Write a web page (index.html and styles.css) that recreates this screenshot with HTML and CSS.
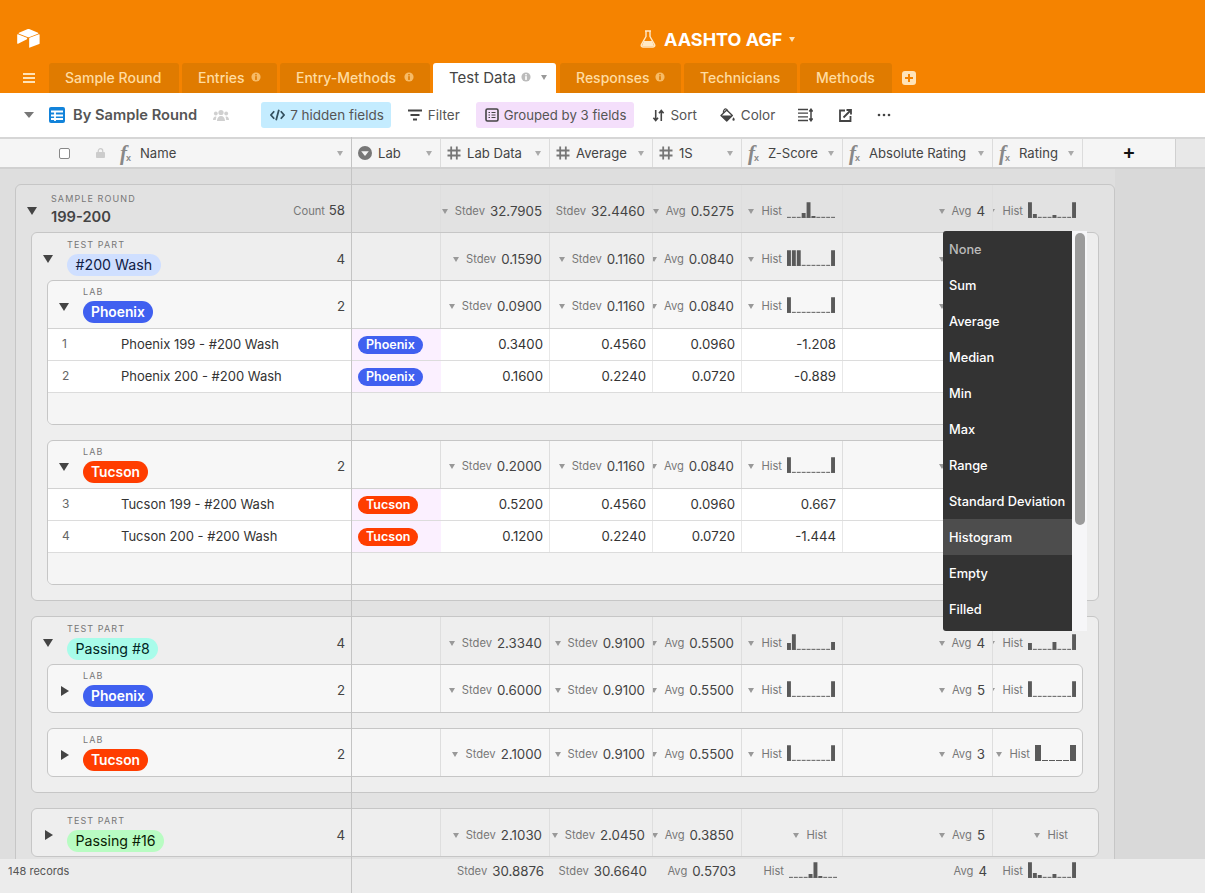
FILE: index.html
```html
<!DOCTYPE html>
<html lang="en">
<head>
<meta charset="utf-8">
<title>AASHTO AGF</title>
<link rel="stylesheet" href="styles.css">
</head>
<body>
<svg class="sprite" xmlns="http://www.w3.org/2000/svg">
  <symbol id="i-info" viewBox="0 0 12 12"><circle cx="6" cy="6" r="5.5" fill="currentColor"/><rect x="5" y="5" width="2" height="4.5" class="info-mark"/><rect x="5" y="2.5" width="2" height="1.6" class="info-mark"/></symbol>
  <symbol id="i-hash" viewBox="0 0 14 14"><path d="M4.2 0.5v13M9.8 0.5v13M0.5 4.5h13M0.5 9.5h13" fill="none" stroke="currentColor" stroke-width="1.8"/></symbol>
  <symbol id="h-za" viewBox="0 0 49 16"><path d="M0 15.5H49" stroke="#5a5a5a" stroke-dasharray="4 1"/><path d="M15 11h4v5h-4zM20 0h4v16h-4zM25 14h4v2h-4z" fill="#5a5a5a"/></symbol>
  <symbol id="h-ra" viewBox="0 0 49 16"><path d="M0 15.5H49" stroke="#5a5a5a" stroke-dasharray="4 1"/><path d="M0 0h4v16h-4zM5 12h4v4h-4zM25 13h4v3h-4zM45 0h4v16h-4z" fill="#5a5a5a"/></symbol>
  <symbol id="h-zb" viewBox="0 0 49 16"><path d="M0 15.5H49" stroke="#5a5a5a" stroke-dasharray="4 1"/><path d="M0 0h4v16h-4zM5 0h4v16h-4zM10 0h4v16h-4zM45 0h4v16h-4z" fill="#5a5a5a"/></symbol>
  <symbol id="h-fl" viewBox="0 0 49 16"><path d="M0 15.5H49" stroke="#5a5a5a" stroke-dasharray="4 1"/><path d="M0 0h4v16h-4zM45 0h4v16h-4z" fill="#5a5a5a"/></symbol>
  <symbol id="h-zc" viewBox="0 0 49 16"><path d="M0 15.5H49" stroke="#5a5a5a" stroke-dasharray="4 1"/><path d="M0 9h4v7h-4zM5 0h4v16h-4zM45 8h4v8h-4z" fill="#5a5a5a"/></symbol>
  <symbol id="h-rc" viewBox="0 0 49 16"><path d="M0 15.5H49" stroke="#5a5a5a" stroke-dasharray="4 1"/><path d="M0 9h4v7h-4zM25 8h4v8h-4zM45 0h4v16h-4z" fill="#5a5a5a"/></symbol>
  <symbol id="h-six" viewBox="0 0 41 16"><path d="M7 15.5H35" stroke="#5a5a5a" stroke-dasharray="6 1"/><path d="M0 0h6v16H0zM35 0h6v16h-6z" fill="#5a5a5a"/></symbol>
  <symbol id="h-zf" viewBox="0 0 49 16"><path d="M0 15.5H49" stroke="#5a5a5a" stroke-dasharray="4 1"/><path d="M20 12h4v4h-4zM25 0h4v16h-4zM30 14h4v2h-4z" fill="#5a5a5a"/></symbol>
  <symbol id="h-rf" viewBox="0 0 49 16"><path d="M0 15.5H49" stroke="#5a5a5a" stroke-dasharray="4 1"/><path d="M0 0h4v16h-4zM5 11h4v5h-4zM10 13h4v3h-4zM25 12h4v4h-4zM45 0h4v16h-4z" fill="#5a5a5a"/></symbol>
</svg>

<header class="appbar">
  <div class="appbar-top">
    <svg class="logo" viewBox="0 0 24 20"><path fill="#fff" d="M10.7.3 2 3.9c-.5.2-.5.9 0 1.1l8.8 3.5c.8.3 1.6.3 2.4 0L22 5c.5-.2.5-.9 0-1.1L13.3.3c-.8-.4-1.8-.4-2.6 0z"/><path fill="#fff" d="M12.7 10.4v8.700c0 .4.400.7.8.5l9.800-3.800c.3-.1.400-.3.400-.6V6c0-.4-.4-.7-.8-.5l-9.800 3.800c-.2.100-.4.300-.4.600z"/><path fill="#fff" d="M10.400 10.900 1 15.400c-.4.200-.9-.1-.9-.5V6.100c0-.2.100-.3.200-.4.100 0 .1-.1.200-.1.100-.1.300-.1.400 0l9.400 3.700c.5.200.5.900.1 1.100z"/></svg>
    <svg class="flask" viewBox="0 0 16 18"><path d="M5 1h6M6 1v5.500L1.400 14.600C.8 15.700 1.500 17 2.800 17h10.400c1.300 0 2-1.300 1.400-2.400L10 6.500V1" fill="none" stroke="#ffe9c6" stroke-width="1.400" stroke-linejoin="round"/><path d="M4 11h8l2 4.500-.6.800H2.600L2 15.500z" fill="#ffe9c6"/></svg>
    <h1 class="base-title">AASHTO AGF</h1>
    <span class="caret caret-title"></span>
  </div>
  <nav class="tabbar">
    <svg class="burger" viewBox="0 0 12 10"><path d="M0 1h12M0 5h12M0 9h12" stroke="#ffe3b8" stroke-width="1.800"/></svg>
    <div class="tab t1">Sample Round</div>
    <div class="tab t2">Entries <svg class="tab-info"><use href="#i-info"/></svg></div>
    <div class="tab t3">Entry-Methods <svg class="tab-info"><use href="#i-info"/></svg></div>
    <div class="tab t4 tab-active">Test Data <svg class="tab-info"><use href="#i-info"/></svg><span class="caret caret-tab"></span></div>
    <div class="tab t5">Responses <svg class="tab-info"><use href="#i-info"/></svg></div>
    <div class="tab t6">Technicians</div>
    <div class="tab t7">Methods</div>
    <svg class="tab-add" viewBox="0 0 14 14"><rect width="14" height="14" rx="3" fill="#ffe3b8"/><path d="M7 3v8M3 7h8" stroke="#f58300" stroke-width="2"/></svg>
  </nav>
</header>

<div class="toolbar">
  <span class="caret caret-view"></span>
  <svg class="grid-icon" viewBox="0 0 16 16"><rect width="16" height="16" rx="2" fill="#1283da"/><path d="M2 4.500h12M2 8.500h12M2 12h12M6 4v10" stroke="#fff" stroke-width="1.800"/></svg>
  <span class="view-name">By Sample Round</span>
  <svg class="people" viewBox="0 0 16 12"><circle cx="8" cy="3.500" r="2.600" fill="#d0d0d0"/><circle cx="2.800" cy="4.500" r="1.900" fill="#d0d0d0"/><circle cx="13.200" cy="4.500" r="1.900" fill="#d0d0d0"/><path d="M4 12c0-3 1.500-5 4-5s4 2 4 5zM0 11c0-2 1-3.500 2.800-3.500l.7.200C3 9 2.800 10 2.800 11zM16 11c0-2-1-3.500-2.800-3.500l-.7.200c.5 1.300.700 2.300.700 3.300z" fill="#d0d0d0"/></svg>
  <div class="tb-pill tb-hidden">
    <svg class="tb-icon" viewBox="0 0 16 14"><path d="M4.500 3 1 7l3.500 4M11.500 3 15 7l-3.500 4M9.500 1.500l-3 11" fill="none" stroke="#33505f" stroke-width="1.900"/></svg>
    <span>7 hidden fields</span>
  </div>
  <div class="tb-btn tb-filter">
    <svg class="tb-icon-filter" viewBox="0 0 14 12"><path d="M0 1.500h14M2.500 6h9M5 10.500h4" stroke="#444" stroke-width="1.900"/></svg>
    <span>Filter</span>
  </div>
  <div class="tb-pill tb-group">
    <svg class="tb-icon-group" viewBox="0 0 14 14"><rect x="1" y="1" width="12" height="12" rx="1.500" fill="none" stroke="#444" stroke-width="1.600"/><path d="M3.500 4.500h1.500M6.500 4.500h4M3.500 7h1.500M6.500 7h4M3.500 9.500h1.500M6.500 9.500h4" stroke="#444" stroke-width="1.200"/></svg>
    <span>Grouped by 3 fields</span>
  </div>
  <div class="tb-btn tb-sort">
    <svg class="tb-icon-sm" viewBox="0 0 13 14"><path d="M3.500 1v11M1 9.500l2.500 3 2.500-3M9.500 13V2M7 4.500l2.500-3 2.500 3" fill="none" stroke="#444" stroke-width="1.700"/></svg>
    <span>Sort</span>
  </div>
  <div class="tb-btn tb-color">
    <svg class="tb-icon" viewBox="0 0 16 15"><path d="M1 8 7.200 2.200 13.200 8 7.200 14z" fill="none" stroke="#444" stroke-width="1.400" stroke-linejoin="round"/><path d="M1 8h12.200L7.200 14z" fill="#444"/><path d="M3.600 5.200C3.200 2.600 5 .6 6.600 1c1 .3 1.300 1.200 1.100 2.600" fill="none" stroke="#444" stroke-width="1.200"/><path d="M14.500 10c.8 1.200 1.200 1.800 1.200 2.500a1.200 1.200 0 0 1-2.400 0c0-.7.400-1.300 1.200-2.500z" fill="#444"/></svg>
    <span>Color</span>
  </div>
  <svg class="tb-rowh" viewBox="0 0 15 14"><path d="M0 1.500h10M0 5.200h10M0 8.800h10M0 12.500h10" stroke="#444" stroke-width="1.300"/><path d="M13 2v10M11.300 3.500 13 1.200l1.700 2.300M11.300 10.500 13 12.800l1.700-2.300" fill="none" stroke="#444" stroke-width="1.500"/></svg>
  <svg class="tb-share" viewBox="0 0 13 13"><path d="M6 1.500H1v10.500h10.500V7" fill="none" stroke="#444" stroke-width="1.800"/><path d="M4.500 8.500 11 2M7.500 1h4.500v4.500" fill="none" stroke="#444" stroke-width="1.800"/></svg>
  <svg class="tb-dots" viewBox="0 0 14 4"><circle cx="2" cy="2" r="1.300" fill="#444"/><circle cx="7" cy="2" r="1.300" fill="#444"/><circle cx="12" cy="2" r="1.300" fill="#444"/></svg>
</div>

<div class="thead">
  <div class="th th-name">
    <span class="checkbox"></span>
    <svg class="lock" viewBox="0 0 10 11"><path d="M2.500 5V3.200a2.500 2.500 0 0 1 5 0V5" fill="none" stroke="#ccc" stroke-width="1.400"/><rect y="4.500" width="10" height="6.500" rx="1" fill="#ccc"/></svg>
    <span class="fx">f<sub>x</sub></span><span class="th-label">Name</span>
    <span class="caret caret-th"></span>
  </div>
  <div class="th c1">
    <svg class="th-icon" viewBox="0 0 14 14"><circle cx="7" cy="7" r="7" fill="#777"/><path d="M3.200 5.200h7.600L7 10z" fill="#f5f5f5"/></svg>
    <span class="th-label">Lab</span><span class="caret caret-th"></span>
  </div>
  <div class="th c2"><svg class="th-icon hash"><use href="#i-hash"/></svg><span class="th-label">Lab Data</span><span class="caret caret-th"></span></div>
  <div class="th c3"><svg class="th-icon hash"><use href="#i-hash"/></svg><span class="th-label">Average</span><span class="caret caret-th"></span></div>
  <div class="th c4"><svg class="th-icon hash"><use href="#i-hash"/></svg><span class="th-label">1S</span><span class="caret caret-th"></span></div>
  <div class="th c5"><span class="fx">f<sub>x</sub></span><span class="th-label">Z-Score</span><span class="caret caret-th"></span></div>
  <div class="th c6"><span class="fx">f<sub>x</sub></span><span class="th-label">Absolute Rating</span><span class="caret caret-th"></span></div>
  <div class="th c7h"><span class="fx">f<sub>x</sub></span><span class="th-label">Rating</span><span class="caret caret-th"></span></div>
  <div class="th th-add">+</div>
  <div class="th-fill"></div>
</div>

<main class="main">
  <section class="group g1">
    <div class="ghead">
      <div class="gleft">
        <span class="tri tri-down"></span>
        <div class="gtitle"><div class="glabel">SAMPLE ROUND</div><div class="gvalue">199-200</div></div>
        <div class="gcount"><span class="lbl">Count</span> <span class="val">58</span></div>
      </div>
      <div class="ag c1"></div>
      <div class="ag c2"><span class="caret"></span><span class="lbl">Stdev</span><span class="val">32.7905</span></div>
      <div class="ag c3"><span class="caret"></span><span class="lbl">Stdev</span><span class="val">32.4460</span></div>
      <div class="ag c4"><span class="caret"></span><span class="lbl">Avg</span><span class="val">0.5275</span></div>
      <div class="ag c5"><span class="caret"></span><span class="lbl">Hist</span><svg class="hist"><use href="#h-za"/></svg></div>
      <div class="ag c6"><span class="caret"></span><span class="lbl">Avg</span><span class="val">4</span></div>
      <div class="ag c7"><span class="caret"></span><span class="lbl">Hist</span><svg class="hist"><use href="#h-ra"/></svg></div>
    </div>

    <section class="group g2">
      <div class="ghead">
        <div class="gleft">
          <span class="tri tri-down"></span>
          <div class="gtitle"><div class="glabel">TEST PART</div><span class="pill pill-wash">#200 Wash</span></div>
          <div class="gcount"><span class="val">4</span></div>
        </div>
        <div class="ag c1"></div>
        <div class="ag c2"><span class="caret"></span><span class="lbl">Stdev</span><span class="val">0.1590</span></div>
        <div class="ag c3"><span class="caret"></span><span class="lbl">Stdev</span><span class="val">0.1160</span></div>
        <div class="ag c4"><span class="caret"></span><span class="lbl">Avg</span><span class="val">0.0840</span></div>
        <div class="ag c5"><span class="caret"></span><span class="lbl">Hist</span><svg class="hist"><use href="#h-zb"/></svg></div>
        <div class="ag c6"><span class="caret caret-covered"></span></div>
        <div class="ag c7"></div>
      </div>

      <section class="group g3">
        <div class="ghead">
          <div class="gleft">
            <span class="tri tri-down"></span>
            <div class="gtitle"><div class="glabel">LAB</div><span class="pill pill-phoenix">Phoenix</span></div>
            <div class="gcount"><span class="val">2</span></div>
          </div>
          <div class="ag c1"></div>
          <div class="ag c2"><span class="caret"></span><span class="lbl">Stdev</span><span class="val">0.0900</span></div>
          <div class="ag c3"><span class="caret"></span><span class="lbl">Stdev</span><span class="val">0.1160</span></div>
          <div class="ag c4"><span class="caret"></span><span class="lbl">Avg</span><span class="val">0.0840</span></div>
          <div class="ag c5"><span class="caret"></span><span class="lbl">Hist</span><svg class="hist"><use href="#h-fl"/></svg></div>
          <div class="ag c6"><span class="caret caret-covered"></span></div>
          <div class="ag c7"></div>
        </div>
        <div class="row">
          <div class="rleft"><span class="rnum">1</span><span class="rname">Phoenix 199 - #200 Wash</span></div>
          <div class="cell c1 cell-lab"><span class="chip chip-phoenix">Phoenix</span></div>
          <div class="cell c2">0.3400</div><div class="cell c3">0.4560</div><div class="cell c4">0.0960</div><div class="cell c5">-1.208</div><div class="cell c6"></div><div class="cell c7"></div>
        </div>
        <div class="row">
          <div class="rleft"><span class="rnum">2</span><span class="rname">Phoenix 200 - #200 Wash</span></div>
          <div class="cell c1 cell-lab"><span class="chip chip-phoenix">Phoenix</span></div>
          <div class="cell c2">0.1600</div><div class="cell c3">0.2240</div><div class="cell c4">0.0720</div><div class="cell c5">-0.889</div><div class="cell c6"></div><div class="cell c7"></div>
        </div>
        <div class="row-add"></div>
      </section>

      <section class="group g3">
        <div class="ghead">
          <div class="gleft">
            <span class="tri tri-down"></span>
            <div class="gtitle"><div class="glabel">LAB</div><span class="pill pill-tucson">Tucson</span></div>
            <div class="gcount"><span class="val">2</span></div>
          </div>
          <div class="ag c1"></div>
          <div class="ag c2"><span class="caret"></span><span class="lbl">Stdev</span><span class="val">0.2000</span></div>
          <div class="ag c3"><span class="caret"></span><span class="lbl">Stdev</span><span class="val">0.1160</span></div>
          <div class="ag c4"><span class="caret"></span><span class="lbl">Avg</span><span class="val">0.0840</span></div>
          <div class="ag c5"><span class="caret"></span><span class="lbl">Hist</span><svg class="hist"><use href="#h-fl"/></svg></div>
          <div class="ag c6"><span class="caret caret-covered"></span></div>
          <div class="ag c7"></div>
        </div>
        <div class="row">
          <div class="rleft"><span class="rnum">3</span><span class="rname">Tucson 199 - #200 Wash</span></div>
          <div class="cell c1 cell-lab"><span class="chip chip-tucson">Tucson</span></div>
          <div class="cell c2">0.5200</div><div class="cell c3">0.4560</div><div class="cell c4">0.0960</div><div class="cell c5">0.667</div><div class="cell c6"></div><div class="cell c7"></div>
        </div>
        <div class="row">
          <div class="rleft"><span class="rnum">4</span><span class="rname">Tucson 200 - #200 Wash</span></div>
          <div class="cell c1 cell-lab"><span class="chip chip-tucson">Tucson</span></div>
          <div class="cell c2">0.1200</div><div class="cell c3">0.2240</div><div class="cell c4">0.0720</div><div class="cell c5">-1.444</div><div class="cell c6"></div><div class="cell c7"></div>
        </div>
        <div class="row-add"></div>
      </section>
    </section>

    <section class="group g2">
      <div class="ghead">
        <div class="gleft">
          <span class="tri tri-down"></span>
          <div class="gtitle"><div class="glabel">TEST PART</div><span class="pill pill-p8">Passing #8</span></div>
          <div class="gcount"><span class="val">4</span></div>
        </div>
        <div class="ag c1"></div>
        <div class="ag c2"><span class="caret"></span><span class="lbl">Stdev</span><span class="val">2.3340</span></div>
        <div class="ag c3"><span class="caret"></span><span class="lbl">Stdev</span><span class="val">0.9100</span></div>
        <div class="ag c4"><span class="caret"></span><span class="lbl">Avg</span><span class="val">0.5500</span></div>
        <div class="ag c5"><span class="caret"></span><span class="lbl">Hist</span><svg class="hist"><use href="#h-zc"/></svg></div>
        <div class="ag c6"><span class="caret"></span><span class="lbl">Avg</span><span class="val">4</span></div>
        <div class="ag c7"><span class="caret"></span><span class="lbl">Hist</span><svg class="hist"><use href="#h-rc"/></svg></div>
      </div>
      <section class="group g3">
        <div class="ghead">
          <div class="gleft">
            <span class="tri tri-right"></span>
            <div class="gtitle"><div class="glabel">LAB</div><span class="pill pill-phoenix">Phoenix</span></div>
            <div class="gcount"><span class="val">2</span></div>
          </div>
          <div class="ag c1"></div>
          <div class="ag c2"><span class="caret"></span><span class="lbl">Stdev</span><span class="val">0.6000</span></div>
          <div class="ag c3"><span class="caret"></span><span class="lbl">Stdev</span><span class="val">0.9100</span></div>
          <div class="ag c4"><span class="caret"></span><span class="lbl">Avg</span><span class="val">0.5500</span></div>
          <div class="ag c5"><span class="caret"></span><span class="lbl">Hist</span><svg class="hist"><use href="#h-fl"/></svg></div>
          <div class="ag c6"><span class="caret"></span><span class="lbl">Avg</span><span class="val">5</span></div>
          <div class="ag c7"><span class="caret"></span><span class="lbl">Hist</span><svg class="hist"><use href="#h-fl"/></svg></div>
        </div>
      </section>
      <section class="group g3">
        <div class="ghead">
          <div class="gleft">
            <span class="tri tri-right"></span>
            <div class="gtitle"><div class="glabel">LAB</div><span class="pill pill-tucson">Tucson</span></div>
            <div class="gcount"><span class="val">2</span></div>
          </div>
          <div class="ag c1"></div>
          <div class="ag c2"><span class="caret"></span><span class="lbl">Stdev</span><span class="val">2.1000</span></div>
          <div class="ag c3"><span class="caret"></span><span class="lbl">Stdev</span><span class="val">0.9100</span></div>
          <div class="ag c4"><span class="caret"></span><span class="lbl">Avg</span><span class="val">0.5500</span></div>
          <div class="ag c5"><span class="caret"></span><span class="lbl">Hist</span><svg class="hist"><use href="#h-fl"/></svg></div>
          <div class="ag c6"><span class="caret"></span><span class="lbl">Avg</span><span class="val">3</span></div>
          <div class="ag c7"><span class="caret"></span><span class="lbl">Hist</span><svg class="hist hist-six"><use href="#h-six"/></svg></div>
        </div>
      </section>
    </section>

    <section class="group g2">
      <div class="ghead">
        <div class="gleft">
          <span class="tri tri-right"></span>
          <div class="gtitle"><div class="glabel">TEST PART</div><span class="pill pill-p16">Passing #16</span></div>
          <div class="gcount"><span class="val">4</span></div>
        </div>
        <div class="ag c1"></div>
        <div class="ag c2"><span class="caret"></span><span class="lbl">Stdev</span><span class="val">2.1030</span></div>
        <div class="ag c3"><span class="caret"></span><span class="lbl">Stdev</span><span class="val">2.0450</span></div>
        <div class="ag c4"><span class="caret"></span><span class="lbl">Avg</span><span class="val">0.3850</span></div>
        <div class="ag c5 ag-nohist"><span class="caret"></span><span class="lbl">Hist</span></div>
        <div class="ag c6"><span class="caret"></span><span class="lbl">Avg</span><span class="val">5</span></div>
        <div class="ag c7 ag-nohist"><span class="caret"></span><span class="lbl">Hist</span></div>
      </div>
    </section>
  </section>
</main>

<footer class="footer">
  <div class="records">148 records</div>
  <div class="ag c1"></div>
  <div class="ag c2"><span class="lbl">Stdev</span><span class="val">30.8876</span></div>
  <div class="ag c3"><span class="lbl">Stdev</span><span class="val">30.6640</span></div>
  <div class="ag c4"><span class="lbl">Avg</span><span class="val">0.5703</span></div>
  <div class="ag c5"><span class="lbl">Hist</span><svg class="hist"><use href="#h-zf"/></svg></div>
  <div class="ag c6"><span class="lbl">Avg</span><span class="val">4</span></div>
  <div class="ag c7"><span class="lbl">Hist</span><svg class="hist"><use href="#h-rf"/></svg></div>
</footer>

<div class="freeze-line"></div>

<div class="agg-menu">
  <ul class="agg-list">
    <li class="agg-none">None</li>
    <li>Sum</li>
    <li>Average</li>
    <li>Median</li>
    <li>Min</li>
    <li>Max</li>
    <li>Range</li>
    <li>Standard Deviation</li>
    <li class="agg-active">Histogram</li>
    <li>Empty</li>
    <li>Filled</li>
  </ul>
  <div class="agg-track"><div class="agg-thumb"></div></div>
</div>
</body>
</html>
```
FILE: styles.css
```css
* { box-sizing: border-box; }
html, body { margin: 0; height: 100%; }
body {
  position: relative;
  display: flex;
  flex-direction: column;
  height: 100vh;
  overflow: hidden;
  font-family: Inter, "Liberation Sans", sans-serif;
  font-size: 13px;
  color: #444;
  background: #d9d9d9;
}
.sprite { position: absolute; width: 0; height: 0; }

/* shared carets */
.caret {
  flex: none;
  width: 0;
  height: 0;
  border-left: 3.500px solid transparent;
  border-right: 3.500px solid transparent;
  border-top: 5px solid #999;
}

/* orange app bar */
.appbar { flex: none; height: 93px; background: #f58300; }
.appbar-top { height: 63px; display: flex; align-items: center; padding: 15px 0 0 17px; }
.logo { width: 23px; height: 19px; flex: none; margin-top: -1px; }
.flask { width: 16px; height: 18px; margin-left: 600px; flex: none; }
.base-title { margin: 2px 0 0 8px; font-size: 18px; font-weight: 700; color: #fff; line-height: 22px; white-space: nowrap; }
.caret-title { margin-left: 7px; border-top-color: #ffe3b8; }
.tabbar { height: 30px; display: flex; align-items: stretch; gap: 3px; }
.burger { width: 12px; height: 10px; margin: 10px 11px 0 23px; flex: none; }
.tab {
  --mark: #e07b00;
  flex: none;
  display: flex;
  align-items: center;
  padding: 0 16px 2px;
  background: #e07b00;
  color: #ffdca0;
  font-size: 14px;
  font-weight: 500;
  border-radius: 3px 3px 0 0;
  white-space: nowrap;
}
.t1 { width: 130px; }
.t2 { width: 95px; }
.t3 { width: 150px; }
.t4 { width: 123px; }
.t5 { width: 121px; margin-left: 1px; }
.t6 { width: 113px; }
.t7 { width: 92px; }
.tab-info { width: 10px; height: 10px; color: #f7bb66; flex: none; margin-left: auto; }
.info-mark { fill: var(--mark); }
.tab-active { --mark: #fff; background: #fff; color: #444; font-size: 15px; font-weight: 400; padding-right: 7px; }
.tab-active .tab-info { color: #bbb; margin-left: 5px; }
.caret-tab { margin-left: 10px; border-top-color: #999; }
.tab-add { width: 14px; height: 14px; margin: 8px 0 0 7px; flex: none; }

/* toolbar */
.toolbar { flex: none; height: 44px; background: #fff; display: flex; align-items: center; padding-left: 24px; font-size: 13.500px; }
.caret-view { border-left-width: 5px; border-right-width: 5px; border-top-width: 6px; border-top-color: #777; }
.grid-icon { width: 16px; height: 16px; margin-left: 15px; flex: none; }
.view-name { margin-left: 8px; font-size: 14.700px; font-weight: 600; color: #555; white-space: nowrap; }
.people { width: 16px; height: 12px; margin-left: 16px; flex: none; }
.tb-pill, .tb-btn { display: flex; align-items: center; gap: 5px; height: 26px; border-radius: 3px; color: #555; white-space: nowrap; }
.tb-pill { padding: 0 7px 0 9px; }
.tb-hidden { margin-left: 32px; background: #c4ecff; }
.tb-group { margin-left: 16px; background: #f4dffb; font-size: 13.200px; padding-right: 8px; }
.tb-filter { margin-left: 17px; gap: 6px; }
.tb-sort { margin-left: 18px; }
.tb-color { margin-left: 23px; gap: 6px; }
.tb-icon { width: 15px; height: 14px; flex: none; }
.tb-icon-filter { width: 14px; height: 12px; flex: none; }
.tb-icon-group { width: 14px; height: 14px; flex: none; }
.tb-icon-sm { width: 13px; height: 13px; flex: none; }
.tb-rowh { width: 15px; height: 14px; margin-left: 23px; flex: none; }
.tb-share { width: 13px; height: 13px; margin-left: 26px; flex: none; }
.tb-dots { width: 14px; height: 4px; margin-left: 25px; flex: none; }

/* columns */
.c1 { width: 89px; }
.c2 { width: 109px; }
.c3 { width: 103px; }
.c4 { width: 89px; }
.c5 { width: 101px; }
.c6 { width: 150px; }
.c7 { width: 89px; }
.c7h { width: 90px; }

/* table head */
.thead {
  flex: none;
  height: 32px;
  display: flex;
  background: #f5f5f5;
  border-top: 2px solid #d6d6d6;
  border-bottom: 2px solid #d0d0d0;
}
.th {
  flex: none;
  display: flex;
  align-items: center;
  padding: 0 8px 0 6px;
  border-right: 1px solid #dcdcdc;
  color: #444;
  font-size: 13.100px;
  white-space: nowrap;
}
.th-name { width: 352px; padding-left: 59px; }
.checkbox { width: 11px; height: 11px; border: 1px solid #888; border-radius: 2px; background: #fff; flex: none; margin-right: 26px; }
.lock { width: 9px; height: 10px; flex: none; margin-right: 15px; }
.fx {
  flex: none;
  width: 16px;
  margin-right: 4px;
  font-family: "Liberation Serif", serif;
  font-style: italic;
  font-weight: 700;
  font-size: 21px;
  line-height: 20px;
  color: #888;
}
.fx sub { font-family: "Liberation Sans", sans-serif; font-style: normal; font-weight: 700; font-size: 9px; line-height: 0; vertical-align: -1px; margin-left: -1px; }
.th-icon { width: 14px; height: 14px; flex: none; margin-right: 6px; }
.hash { color: #777; }
.th-label { flex: 1; min-width: 0; }
.caret-th { margin-left: 4px; border-top-color: #aaa; }
.th-add { width: 93px; justify-content: center; padding: 0 0 3px; font-size: 20px; font-weight: 600; color: #111; border-right: 1px solid #d0d0d0; }
.th-fill { flex: 1; background: #e8e8e8; }

/* grouped rows */
.main { flex: 1; min-height: 0; overflow: hidden; padding: 15px 0 0 15px; background: linear-gradient(90deg, #dedede 1115px, #d9d9d9 1115px); }
.group { border: 1px solid #c6c6c6; border-radius: 6px; }
.g1 { width: 1100px; background: #e2e2e2; padding: 0 15px 60px; }
.g2 { background: #eeeeee; margin-bottom: 15px; padding: 0 15px 15px; }
.g2:last-child { padding-bottom: 0; }
.g3 { background: #f7f7f7; overflow: hidden; }
.g3 + .g3 { margin-top: 15px; }
.ghead { height: 47px; display: flex; }
.g1 > .ghead { margin: 0 -15px; padding-right: 32px; }
.g2 > .ghead { margin: 0 -15px; padding-right: 16px; }
.g3:has(.row) > .ghead { height: 48px; border-bottom: 1px solid #d2d2d2; }
.gleft { flex: 1; min-width: 0; display: flex; padding-left: 11px; }
.tri { flex: none; width: 24px; align-self: center; margin-top: 5px; height: 8px; }
.tri-down::before {
  content: "";
  display: block;
  width: 0;
  height: 0;
  border-left: 5.500px solid transparent;
  border-right: 5.500px solid transparent;
  border-top: 8px solid #444;
}
.tri-right { height: 11px; padding-left: 2px; }
.tri-right::before {
  content: "";
  display: block;
  width: 0;
  height: 0;
  border-top: 5.500px solid transparent;
  border-bottom: 5.500px solid transparent;
  border-left: 8px solid #444;
}
.gtitle { flex: 1; min-width: 0; display: flex; flex-direction: column; align-items: flex-start; padding-top: 6px; }
.g3 .gtitle { padding-top: 5px; }
.g1 > .ghead .gtitle { padding-top: 8px; }
.glabel { font-size: 9px; line-height: 12px; letter-spacing: 1.100px; color: #777; margin-bottom: 3px; white-space: nowrap; }
.gvalue { font-size: 14.700px; line-height: 20px; font-weight: 600; color: #444; margin-top: -1px; }
.pill {
  height: 22px;
  padding: 0 8.500px;
  border-radius: 11px;
  font-size: 14.200px;
  line-height: 22px;
  white-space: nowrap;
}
.pill-wash { background: #cfdfff; color: #102046; }
.pill-phoenix { background: #4060f0; color: #fff; font-weight: 600; font-size: 13.800px; padding: 0 8px; }
.pill-tucson { background: #ff3d00; color: #fff; font-weight: 600; font-size: 13.800px; padding: 0 8px; }
.pill-p8 { background: #a8fcea; color: #012524; }
.pill-p16 { background: #b8fcc2; color: #0b1d05; }
.gcount { align-self: center; margin-top: 5px; padding-right: 7px; white-space: nowrap; }
.g1 > .ghead .gcount, .g3 .gcount { margin-top: 3px; }

.ag {
  flex: none;
  display: flex;
  align-items: center;
  justify-content: flex-end;
  gap: 5px;
  padding: 5px 7px 0 0;
  border-right: 1px solid #dedede;
  overflow: hidden;
  white-space: nowrap;
}
.g3 .ag { padding-top: 3px; }
.ag > .caret { margin-right: 2px; }
.ag > .caret-covered { margin-right: 40px; }
.ag.c7 { border-right: 0; padding-right: 6px; }
.ag-nohist { padding-right: 15px; }
.ag.c7.ag-nohist { padding-right: 14px; }
.lbl { font-size: 11.200px; color: #777; }
.val { font-size: 13.300px; color: #444; }
.hist { width: 48px; height: 16px; flex: none; margin-top: -2px; }
.hist-six { width: 41px; }

.row { height: 32px; display: flex; background: #fff; border-bottom: 1px solid #dcdcdc; }
.rleft { flex: 1; min-width: 0; display: flex; align-items: center; padding-bottom: 2px; color: #333; }
.rnum { width: 73px; padding-left: 14px; color: #666; flex: none; font-size: 12px; }
.rname { white-space: nowrap; }
.cell {
  flex: none;
  display: flex;
  align-items: center;
  justify-content: flex-end;
  padding: 0 6px 2px 0;
  border-right: 1px solid #e8e8e8;
  color: #333;
  font-size: 13.200px;
}
.cell.c7 { border-right: 0; }
.cell-lab { justify-content: flex-start; padding: 0 0 0 6px; background: #fbf0ff; border-right: 0; }
.chip { height: 18px; padding: 0 8px; border-radius: 9px; line-height: 18px; font-weight: 600; color: #fff; font-size: 12.500px; }
.chip-phoenix { background: #4060f0; }
.chip-tucson { background: #ff3d00; }
.row-add { height: 31px; background: #f5f5f5; }

/* footer summary */
.footer {
  flex: none;
  height: 34px;
  display: flex;
  background: #ececec;
  padding-right: 123px;
}
.records { flex: 1; padding: 5px 0 0 8px; font-size: 11px; line-height: 14px; color: #555; }
.footer .ag { border-right: 0; align-items: flex-start; padding: 3px 6px 0 0; }
.footer .lbl { line-height: 18px; }
.footer .val { line-height: 18px; }
.footer .hist { margin-top: 0; }

/* frozen column divider, over the rows */
.freeze-line { position: absolute; left: 351px; top: 137px; bottom: 0; width: 1px; background: #c4c4c4; }

/* aggregation dropdown */
.agg-menu { position: absolute; left: 943px; top: 231px; width: 144px; height: 400px; display: flex; }
.agg-list { width: 129px; margin: 0; padding: 0; list-style: none; background: #333; border-radius: 3px 0 0 3px; }
.agg-list li { height: 36px; padding-left: 6px; line-height: 37px; font-size: 12.800px; font-weight: 500; color: #fff; white-space: nowrap; }
.agg-list .agg-none { color: #bbb; }
.agg-list .agg-active { background: #4d4d4d; }
.agg-track { width: 15px; padding: 2px 2px 0 3px; background: #f6f6f8; }
.agg-thumb { height: 292px; background: #9b9b9b; border-radius: 5px; }
```
